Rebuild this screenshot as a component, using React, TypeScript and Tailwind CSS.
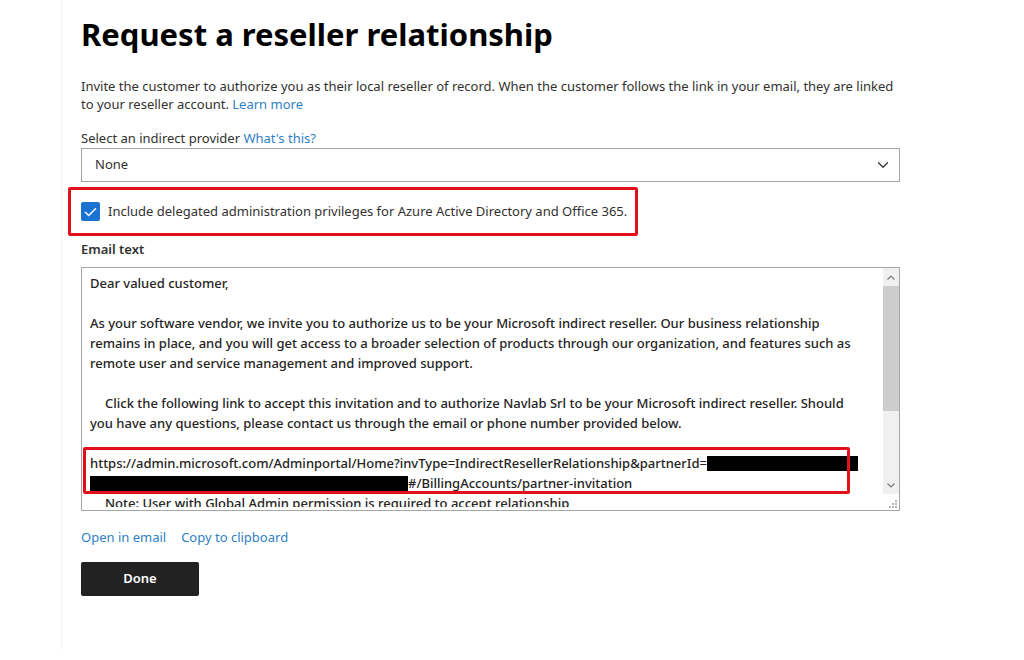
import { ChevronDown } from 'lucide-react'

const FONT = "font-['Segoe_UI','Noto_Sans','Open_Sans',sans-serif]"

function Redacted({ w }: { w: number }) {
  return <span className="inline-block h-[15px] bg-black align-[-3px]" style={{ width: w }} />
}

function EmailBox() {
  return (
    <div className="relative mt-[9px] h-[244px] w-[819px] border border-[#a6a6a6] bg-white flex">
      <div className="relative flex-1 overflow-hidden pl-[8px] pt-[5px] text-[13px] leading-[20px] font-medium text-[#252423] whitespace-nowrap">
        <div>Dear valued customer,</div>
        <div>&nbsp;</div>
        <div>As your software vendor, we invite you to authorize us to be your Microsoft indirect reseller. Our business relationship</div>
        <div>remains in place, and you will get access to a broader selection of products through our organization, and features such as</div>
        <div>remote user and service management and improved support.</div>
        <div>&nbsp;</div>
        <div className="pl-[15px]">Click the following link to accept this invitation and to authorize Navlab Srl to be your Microsoft indirect reseller. Should</div>
        <div>you have any questions, please contact us through the email or phone number provided below.</div>
        <div>&nbsp;</div>
        <div>
          https://admin.microsoft.com/Adminportal/Home?invType=IndirectResellerRelationship&amp;partnerId=
          <Redacted w={151} />
        </div>
        <div>
          <Redacted w={318} />
          #/BillingAccounts/partner-invitation
        </div>
        <div className="h-[14px] overflow-hidden pl-[15px]">Note: User with Global Admin permission is required to accept relationship</div>
        {/* annotation around the link */}
        <div className="absolute left-[1px] top-[179px] h-[47px] w-[767px] rounded-[2px] border-[3px] border-[#e3101b]" />
      </div>
      {/* scrollbar */}
      <div className="flex w-[16px] flex-col bg-[#f0f0f0]">
        <div className="flex h-[18px] items-center justify-center text-[#7a7a7a]">
          <svg width="8" height="5" viewBox="0 0 8 5"><path d="M0.5 4.5 L4 1 L7.5 4.5" fill="none" stroke="currentColor" strokeWidth="1.2" /></svg>
        </div>
        <div className="h-[125px] bg-[#cdcdcd]" />
        <div className="flex-1" />
        <div className="flex h-[18px] items-center justify-center text-[#7a7a7a]">
          <svg width="8" height="5" viewBox="0 0 8 5"><path d="M0.5 0.5 L4 4 L7.5 0.5" fill="none" stroke="currentColor" strokeWidth="1.2" /></svg>
        </div>
        <div className="flex h-[16px] items-end justify-end bg-white pb-[2px] pr-[2px]">
          <svg width="8" height="8" viewBox="0 0 8 8" fill="#b5b5b5">
            <rect x="6" y="0" width="2" height="2" />
            <rect x="3" y="3" width="2" height="2" />
            <rect x="6" y="3" width="2" height="2" />
            <rect x="0" y="6" width="2" height="2" />
            <rect x="3" y="6" width="2" height="2" />
            <rect x="6" y="6" width="2" height="2" />
          </svg>
        </div>
      </div>
    </div>
  )
}

export default function App() {
  return (
    <div className={`min-h-screen w-full bg-white ${FONT} text-[#323130]`}>
      <div className="ml-[61px] h-[650px] w-[963px] border-l border-[#f2f2f2] pl-[19px] pt-[12px]">
        <h1 className="text-[31px] leading-[44px] font-bold text-black">Request a reseller relationship</h1>

        <p className="mt-[21px] w-[819px] text-[13px] leading-[18px]">
          Invite the customer to authorize you as their local reseller of record. When the customer follows the link in your email, they are linked to your reseller account.{' '}
          <a className="text-[#2f7fc4]">Learn more</a>
        </p>

        <div className="mt-[16px] text-[13px] leading-[18px]">
          Select an indirect provider <a className="text-[#2f7fc4]">What's this?</a>
        </div>

        <div className="mt-[1px] flex h-[34px] w-[819px] items-center justify-between border border-[#a6a6a6] pl-[13px] pr-[7px] text-[13px]">
          <span>None</span>
          <ChevronDown size={18} strokeWidth={1.6} className="text-[#323130]" />
        </div>

        {/* annotation around the checkbox */}
        <div className="-ml-[13px] mt-[5px] flex h-[49px] w-[570px] items-center gap-[8px] rounded-[2px] border-[3px] border-[#e3101b] pl-[10px]">
          <div className="flex h-[19px] w-[19px] items-center justify-center rounded-[2px] bg-[#1a73d0]">
            <svg width="13" height="10" viewBox="0 0 13 10"><path d="M1 5 L4.7 8.6 L12 1.2" fill="none" stroke="white" strokeWidth="1.4" /></svg>
          </div>
          <span className="text-[13px]">Include delegated administration privileges for Azure Active Directory and Office 365.</span>
        </div>

        <div className="mt-[4px] text-[13px] leading-[18px] font-semibold">Email text</div>

        <EmailBox />

        <div className="mt-[17px] flex gap-[15px] text-[13px] leading-[18px] text-[#2f7fc4]">
          <a>Open in email</a>
          <a>Copy to clipboard</a>
        </div>

        <button className="mt-[16px] h-[34px] w-[118px] rounded-[2px] bg-[#222222] text-[13px] font-semibold text-white">
          Done
        </button>
      </div>
    </div>
  )
}
